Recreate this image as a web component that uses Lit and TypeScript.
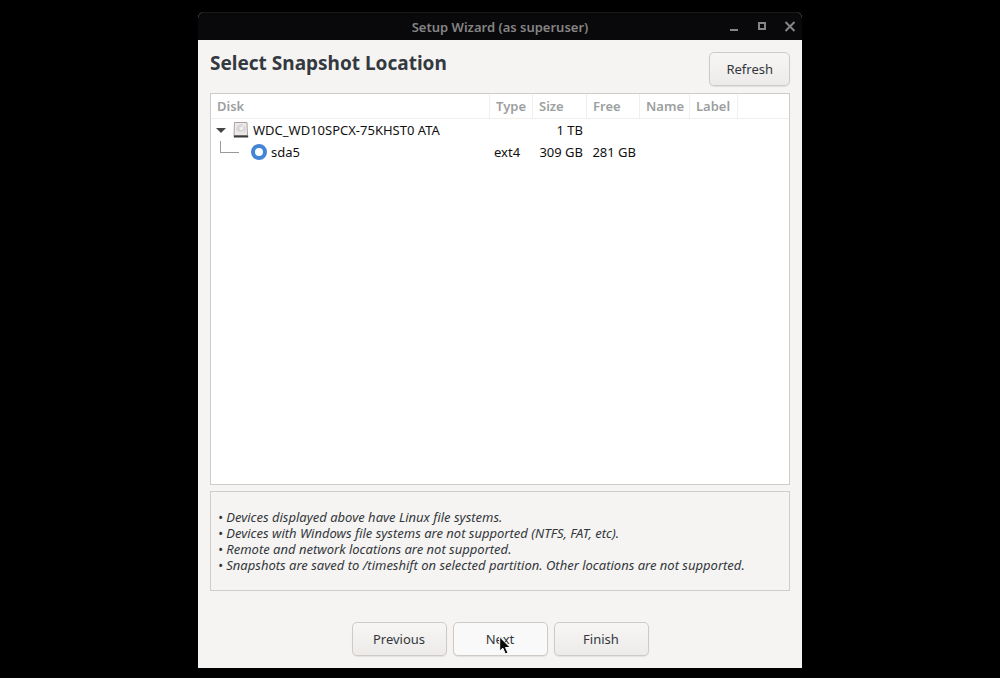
import { LitElement, html, css, nothing } from "lit";
import { customElement, state } from "lit/decorators.js";

interface Device {
  name: string;
  kind: "disk" | "partition";
  type: string;
  size: string;
  free: string;
  label: string;
  partName: string;
}

const DEVICES: Device[] = [
  { name: "WDC_WD10SPCX-75KHST0 ATA", kind: "disk", type: "", size: "1 TB", free: "", partName: "", label: "" },
  { name: "sda5", kind: "partition", type: "ext4", size: "309 GB", free: "281 GB", partName: "", label: "" },
];

const NOTES = [
  "Devices displayed above have Linux file systems.",
  "Devices with Windows file systems are not supported (NTFS, FAT, etc).",
  "Remote and network locations are not supported.",
  "Snapshots are saved to /timeshift on selected partition. Other locations are not supported.",
];

@customElement("app-root")
export class AppRoot extends LitElement {
  static styles = css`
    :host {
      display: flex;
      justify-content: center;
      box-sizing: border-box;
      min-height: 100vh;
      padding: 12px 0 10px;
      background: #000;
      color: #33373c;
      font-family: "Noto Sans", "Open Sans", sans-serif;
      font-size: 13px;
      line-height: 16px;
    }
    * {
      box-sizing: border-box;
    }
    .window {
      display: flex;
      flex-direction: column;
      width: 100%;
      max-width: 604px;
      border-radius: 6px 6px 0 0;
      overflow: hidden;
      background: #f5f4f2;
    }
    .titlebar {
      display: grid;
      grid-template-columns: 1fr auto 1fr;
      align-items: center;
      height: 28px;
      padding: 0 4px;
      background: #09090b;
      border-top: 1px solid #1a1a1b;
      color: #858585;
    }
    .title {
      grid-column: 2;
      margin: 0;
      font-weight: 600;
    }
    .controls {
      display: flex;
      justify-content: flex-end;
      gap: 12px;
    }
    .control {
      display: flex;
      width: 16px;
      height: 16px;
      padding: 0;
      border: 0;
      background: none;
      color: #858585;
    }
    .body {
      display: flex;
      flex: 1;
      flex-direction: column;
      padding: 12px;
    }
    .header {
      display: flex;
      justify-content: space-between;
      align-items: flex-start;
      margin-bottom: 7px;
    }
    .heading {
      margin: 0;
      color: #33393f;
      font-size: 19px;
      line-height: 22px;
      font-weight: 700;
    }
    .button {
      min-width: 95px;
      height: 34px;
      padding: 0 16px;
      border: 1px solid #cfcac6;
      border-radius: 5px;
      background: linear-gradient(#f7f6f5, #edebe9);
      box-shadow: 0 1px 1px rgba(0, 0, 0, 0.08);
      color: #33373c;
      font: inherit;
    }
    .button.compact {
      min-width: 80px;
    }
    .button.hover {
      background: #f9f9f9;
    }
    .list {
      flex: 1;
      border: 1px solid #cfcdca;
      background: #fff;
    }
    .devices {
      width: 100%;
      table-layout: fixed;
      border-collapse: separate;
      border-spacing: 0;
      color: #111;
    }
    .col-type { width: 43px; }
    .col-size { width: 54px; }
    .col-free { width: 53px; }
    .col-name { width: 50px; }
    .col-label { width: 48px; }
    .col-rest { width: 51px; }
    th {
      height: 25px;
      padding: 0 6px;
      border-right: 1px solid #f0efee;
      border-bottom: 1px solid #f0efee;
      color: #9c9fa0;
      font-weight: 600;
      text-align: left;
      white-space: nowrap;
    }
    th:last-child {
      border-right: 0;
    }
    td {
      height: 22px;
      padding: 0 4px;
      white-space: nowrap;
    }
    .num {
      text-align: right;
    }
    .cell {
      display: flex;
      align-items: center;
      height: 22px;
    }
    .expander {
      display: flex;
      width: 12px;
      height: 12px;
      margin-right: 6px;
      padding: 0;
      border: 0;
      background: none;
    }
    .disk-icon {
      margin-right: 4px;
    }
    .branch {
      align-self: flex-start;
      width: 19px;
      height: 12px;
      margin: 0 12px 0 5px;
      border: solid #999;
      border-width: 0 0 1px 1px;
    }
    .choice {
      display: flex;
      align-items: center;
      gap: 4px;
    }
    .radio {
      appearance: none;
      width: 16px;
      height: 16px;
      margin: 0;
      border: 4px solid #4285d6;
      border-radius: 50%;
      background: #fff;
    }
    .notes {
      margin: 6px 0 0;
      padding: 17px 7px;
      border: 1px solid #cfcdca;
      font-style: italic;
      list-style: none;
    }
    .footer {
      display: flex;
      justify-content: center;
      gap: 6px;
      padding-top: 31px;
    }
    .hotspot {
      position: relative;
    }
    .pointer {
      position: absolute;
      left: 46px;
      top: 14px;
      pointer-events: none;
    }
  `;

  @state() private expanded = true;

  private toggle() {
    this.expanded = !this.expanded;
  }

  private renderName(d: Device) {
    if (d.kind === "disk") {
      return html`<div class="cell">
        <button class="expander" aria-label="Toggle partitions" aria-expanded=${this.expanded} @click=${this.toggle}>
          <svg width="12" height="12" viewBox="0 0 12 12"><path d="M1 4h10L6 9z" fill="#454545" /></svg>
        </button>
        <svg class="disk-icon" width="16" height="16" viewBox="0 0 16 16">
          <path d="M1.500 .5h12.500l.5 13H1z" fill="#ece9e8" stroke="#a5a2a1" />
          <ellipse cx="8" cy="7" rx="4.800" ry="4.800" fill="#d9d6d5" />
          <path d="M4 9.500a4.500 4.500 0 0 0 7-.5M8 7l3-4" fill="none" stroke="#faf9f9" />
          <circle cx="8.500" cy="6.500" r="1.500" fill="#f5f4f4" />
          <path d="M.8 14.500h14.400" stroke="#3c3a39" stroke-width="1.800" />
        </svg>
        <span>${d.name}</span>
      </div>`;
    }
    return html`<div class="cell">
      <span class="branch"></span>
      <label class="choice"><input class="radio" type="radio" name="device" checked />${d.name}</label>
    </div>`;
  }

  render() {
    return html`
      <main class="window">
        <header class="titlebar">
          <p class="title">Setup Wizard (as superuser)</p>
          <div class="controls">
            <button class="control" aria-label="Minimize">
              <svg width="16" height="16"><path d="M4 11h8" stroke="currentColor" stroke-width="2" /></svg>
            </button>
            <button class="control" aria-label="Maximize">
              <svg width="16" height="16"><path d="M5 4h6v6H5z" fill="none" stroke="currentColor" stroke-width="2" /></svg>
            </button>
            <button class="control" aria-label="Close">
              <svg width="16" height="16"><path d="M3.500 3l9 9m0-9l-9 9" stroke="currentColor" stroke-width="2" /></svg>
            </button>
          </div>
        </header>
        <div class="body">
          <div class="header">
            <h1 class="heading">Select Snapshot Location</h1>
            <button class="button compact">Refresh</button>
          </div>
          <div class="list">
            <table class="devices">
              <colgroup>
                <col />
                <col class="col-type" />
                <col class="col-size" />
                <col class="col-free" />
                <col class="col-name" />
                <col class="col-label" />
                <col class="col-rest" />
              </colgroup>
              <thead>
                <tr>
                  <th>Disk</th><th>Type</th><th>Size</th><th>Free</th><th>Name</th><th>Label</th><th></th>
                </tr>
              </thead>
              <tbody>
                ${DEVICES.map((d) =>
                  d.kind === "partition" && !this.expanded
                    ? nothing
                    : html`<tr>
                        <td>${this.renderName(d)}</td>
                        <td>${d.type}</td>
                        <td class="num">${d.size}</td>
                        <td class="num">${d.free}</td>
                        <td>${d.partName}</td>
                        <td>${d.label}</td>
                        <td></td>
                      </tr>`
                )}
              </tbody>
            </table>
          </div>
          <ul class="notes">
            ${NOTES.map((n) => html`<li>• ${n}</li>`)}
          </ul>
          <footer class="footer">
            <button class="button">Previous</button>
            <div class="hotspot">
              <button class="button hover">Next</button>
              <svg class="pointer" width="12" height="20" viewBox="0 0 12 20">
                <path d="M.7 1v14l3.200-2.800L6.300 18l2.700-1.200-2.500-5.300h4.700z" fill="#0a0a0a" stroke="#fff" stroke-width="1" />
              </svg>
            </div>
            <button class="button">Finish</button>
          </footer>
        </div>
      </main>
    `;
  }
}
